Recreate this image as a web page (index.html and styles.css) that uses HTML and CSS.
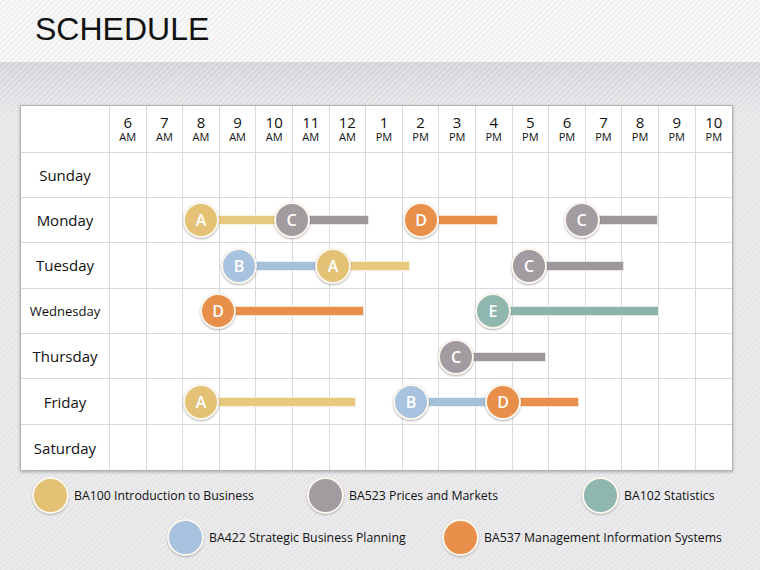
FILE: index.html
```html
<!DOCTYPE html>
<html>
<head>
<meta charset="utf-8">
<link rel="stylesheet" href="styles.css">
</head>
<body>
<header class="top"><h1 class="title">SCHEDULE</h1></header>
<main class="main">
  <div class="sched">
    <div class="grid">
      <div class="c h"></div>
      <div class="c h"><b>6</b><i>AM</i></div>
      <div class="c h"><b>7</b><i>AM</i></div>
      <div class="c h"><b>8</b><i>AM</i></div>
      <div class="c h"><b>9</b><i>AM</i></div>
      <div class="c h"><b>10</b><i>AM</i></div>
      <div class="c h"><b>11</b><i>AM</i></div>
      <div class="c h"><b>12</b><i>AM</i></div>
      <div class="c h"><b>1</b><i>PM</i></div>
      <div class="c h"><b>2</b><i>PM</i></div>
      <div class="c h"><b>3</b><i>PM</i></div>
      <div class="c h"><b>4</b><i>PM</i></div>
      <div class="c h"><b>5</b><i>PM</i></div>
      <div class="c h"><b>6</b><i>PM</i></div>
      <div class="c h"><b>7</b><i>PM</i></div>
      <div class="c h"><b>8</b><i>PM</i></div>
      <div class="c h"><b>9</b><i>PM</i></div>
      <div class="c h last"><b>10</b><i>PM</i></div>

      <div class="c day">Sunday</div>
      <div class="c"></div><div class="c"></div><div class="c"></div><div class="c"></div><div class="c"></div><div class="c"></div><div class="c"></div><div class="c"></div><div class="c"></div><div class="c"></div><div class="c"></div><div class="c"></div><div class="c"></div><div class="c"></div><div class="c"></div><div class="c"></div><div class="c last"></div>

      <div class="c day">Monday</div>
      <div class="c"></div><div class="c"></div><div class="c"></div><div class="c"></div><div class="c"></div><div class="c"></div><div class="c"></div><div class="c"></div><div class="c"></div><div class="c"></div><div class="c"></div><div class="c"></div><div class="c"></div><div class="c"></div><div class="c"></div><div class="c"></div><div class="c last"></div>

      <div class="c day">Tuesday</div>
      <div class="c"></div><div class="c"></div><div class="c"></div><div class="c"></div><div class="c"></div><div class="c"></div><div class="c"></div><div class="c"></div><div class="c"></div><div class="c"></div><div class="c"></div><div class="c"></div><div class="c"></div><div class="c"></div><div class="c"></div><div class="c"></div><div class="c last"></div>

      <div class="c day small">Wednesday</div>
      <div class="c"></div><div class="c"></div><div class="c"></div><div class="c"></div><div class="c"></div><div class="c"></div><div class="c"></div><div class="c"></div><div class="c"></div><div class="c"></div><div class="c"></div><div class="c"></div><div class="c"></div><div class="c"></div><div class="c"></div><div class="c"></div><div class="c last"></div>

      <div class="c day">Thursday</div>
      <div class="c"></div><div class="c"></div><div class="c"></div><div class="c"></div><div class="c"></div><div class="c"></div><div class="c"></div><div class="c"></div><div class="c"></div><div class="c"></div><div class="c"></div><div class="c"></div><div class="c"></div><div class="c"></div><div class="c"></div><div class="c"></div><div class="c last"></div>

      <div class="c day">Friday</div>
      <div class="c"></div><div class="c"></div><div class="c"></div><div class="c"></div><div class="c"></div><div class="c"></div><div class="c"></div><div class="c"></div><div class="c"></div><div class="c"></div><div class="c"></div><div class="c"></div><div class="c"></div><div class="c"></div><div class="c"></div><div class="c"></div><div class="c last"></div>

      <div class="c day bot">Saturday</div>
      <div class="c bot"></div><div class="c bot"></div><div class="c bot"></div><div class="c bot"></div><div class="c bot"></div><div class="c bot"></div><div class="c bot"></div><div class="c bot"></div><div class="c bot"></div><div class="c bot"></div><div class="c bot"></div><div class="c bot"></div><div class="c bot"></div><div class="c bot"></div><div class="c bot"></div><div class="c bot"></div><div class="c bot last"></div>
    </div>

    <div class="ev a" style="left:180px;top:114.9px;width:90px"><span class="bar"></span><span class="dot">A</span></div>
    <div class="ev c-" style="left:270.7px;top:114.9px;width:77px"><span class="bar"></span><span class="dot">C</span></div>
    <div class="ev d" style="left:400px;top:114.9px;width:77px"><span class="bar"></span><span class="dot">D</span></div>
    <div class="ev c-" style="left:560.7px;top:114.9px;width:76px"><span class="bar"></span><span class="dot">C</span></div>

    <div class="ev b" style="left:218px;top:160.3px;width:94px"><span class="bar"></span><span class="dot">B</span></div>
    <div class="ev a" style="left:312px;top:160.3px;width:77px"><span class="bar"></span><span class="dot">A</span></div>
    <div class="ev c-" style="left:508px;top:160.3px;width:95px"><span class="bar"></span><span class="dot">C</span></div>

    <div class="ev d" style="left:197px;top:205.7px;width:146px"><span class="bar"></span><span class="dot">D</span></div>
    <div class="ev e" style="left:472px;top:205.7px;width:166px"><span class="bar"></span><span class="dot">E</span></div>

    <div class="ev c-" style="left:435px;top:251.1px;width:90px"><span class="bar"></span><span class="dot">C</span></div>

    <div class="ev a" style="left:180px;top:296.5px;width:155px"><span class="bar"></span><span class="dot">A</span></div>
    <div class="ev b" style="left:390px;top:296.5px;width:92px"><span class="bar"></span><span class="dot">B</span></div>
    <div class="ev d" style="left:482px;top:296.5px;width:76px"><span class="bar"></span><span class="dot">D</span></div>
  </div>

  <div class="legend">
    <div class="lrow">
      <div class="li"><span class="sw a"></span>BA100 Introduction to Business</div>
      <div class="li"><span class="sw c-"></span>BA523 Prices and Markets</div>
      <div class="li"><span class="sw e"></span>BA102 Statistics</div>
    </div>
    <div class="lrow second">
      <div class="li"><span class="sw b"></span>BA422 Strategic Business Planning</div>
      <div class="li"><span class="sw d"></span>BA537 Management Information Systems</div>
    </div>
  </div>
</main>
</body>
</html>
```

FILE: styles.css
```css
* { box-sizing: border-box; }
html, body { margin: 0; padding: 0; }
body {
  width: 760px;
  height: 570px;
  overflow: hidden;
  font-family: "Open Sans", "DejaVu Sans", sans-serif;
  color: #1b1b1b;
  background: #e4e4e7;
}
.top {
  height: 62px;
  background:
    repeating-linear-gradient(135deg, rgba(255,255,255,0.55) 0 2px, rgba(255,255,255,0) 2px 4px),
    #f0f0f2;
}
.title {
  margin: 0;
  padding-left: 35px;
  font-family: "Liberation Sans", Arial, sans-serif;
  font-weight: normal;
  font-size: 32px;
  line-height: 59px;
  color: #111;
}
.main {
  height: 508px;
  padding: 42.5px 0 0 20px;
  background:
    repeating-linear-gradient(135deg, rgba(255,255,255,0.25) 0 2px, rgba(255,255,255,0) 2px 4px),
    linear-gradient(180deg, #d3d3d7 0px, #dcdce0 25px, #e6e6e9 60px, #e5e5e8 100%);
}
.sched {
  position: relative;
  width: 713.2px;
  border: 1px solid #b3b3b8;
  background: #fff;
  box-shadow: 0 1px 3px rgba(0,0,0,0.28);
}
.grid {
  display: grid;
  grid-template-columns: 89px repeat(17, 36.6px);
  grid-template-rows: 47px repeat(7, 45.4px);
}
.c {
  border-right: 1px solid #d8d8dd;
  border-bottom: 1px solid #d8d8dd;
  background: #fff;
}
.c.last { border-right: none; }
.c.bot { border-bottom: none; }
.h {
  display: flex;
  flex-direction: column;
  align-items: center;
  justify-content: center;
  padding-bottom: 1px;
}
.h b {
  font-weight: normal;
  font-size: 15px;
  line-height: 17px;
  color: #111;
}
.h i {
  font-style: normal;
  font-size: 11px;
  line-height: 12px;
  color: #111;
}
.day {
  display: flex;
  align-items: center;
  justify-content: center;
  font-size: 15px;
  color: #111;
}
.day.small { font-size: 13px; }

.ev {
  position: absolute;
  height: 0;
}
.bar {
  position: absolute;
  left: 0;
  right: 0;
  top: -5px;
  height: 10px;
  border: 1px solid rgba(255,255,255,0.75);
}
.dot {
  position: absolute;
  left: -18px;
  top: -18px;
  width: 36px;
  height: 36px;
  border-radius: 50%;
  border: 2px solid #fbf7ee;
  box-shadow: 0 1px 2px rgba(0,0,0,0.3);
  color: #fff;
  font-size: 16px;
  font-weight: 600;
  display: flex;
  align-items: center;
  justify-content: center;
  line-height: 1;
}
.a .bar { background: #e6c87f; }
.a .dot, .sw.a { background: #e3c276; }
.b .bar { background: #a6c0d9; }
.b .dot, .sw.b { background: #a7c3df; }
.c- .bar { background: #9e989c; }
.c- .dot, .sw.c- { background: #a29b9f; }
.d .bar { background: #e8904b; }
.d .dot, .sw.d { background: #e88f4b; }
.e .bar { background: #8db4ab; }
.e .dot, .sw.e { background: #8fb7ae; }

.legend {
  padding: 6px 0 0 12px;
}
.lrow {
  display: grid;
  grid-template-columns: 275px 275px 160px;
  height: 36px;
}
.lrow.second {
  margin-top: 6px;
  padding-left: 135px;
  grid-template-columns: 275px 275px;
}
.li {
  display: flex;
  align-items: center;
  gap: 5px;
  font-size: 12.3px;
  white-space: nowrap;
  color: #111;
}
.sw {
  flex: none;
  width: 37px;
  height: 37px;
  border-radius: 50%;
  border: 2px solid #fbf7ee;
  box-shadow: 0 1px 2px rgba(0,0,0,0.25);
}
```
